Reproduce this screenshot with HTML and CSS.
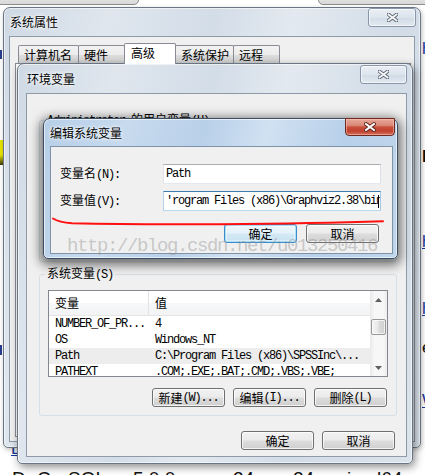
FILE: index.html
```html
<!DOCTYPE html>
<html lang="zh-CN">
<head>
<meta charset="utf-8">
<title>编辑系统变量</title>
<link rel="stylesheet" href="styles.css">
</head>
<body>
<div class="desk">
  <div class="bgwin bgwin-l"></div>
  <div class="bgwin bgwin-r"></div>
  <div class="bgmark bgmark-y"></div>
  <div class="bgmark bgmark-b1"></div>
  <div class="bgmark bgmark-b2"></div>
  <span class="frag lnk f1">h</span>
  <span class="frag f2">I</span>
  <span class="frag lnk ul f3">h</span>
  <span class="frag lnk ul f4">h</span>
  <span class="frag f5">e</span>
  <span class="frag lnk ul f6">W</span>
  <span class="frag lnk ul f7">L</span>
  <div class="bgline"><span class="b1">D</span><span class="b2">C</span><span class="b3">SQL</span><span class="b4">5.0.0</span><span class="b5">24</span><span class="b6">24</span><span class="b7">i</span><span class="b8">l64</span></div>

  <section class="win win-sys">
    <header class="tbar"><span class="ttl">系统属性</span>
      <span class="xbtn"><svg width="11" height="9" viewBox="0 0 11 9"><path d="M1.5 1.5L9.5 7.5M9.5 1.5L1.5 7.5" stroke="#5b6470" stroke-width="3.6" stroke-linecap="square"/><path d="M1.5 1.5L9.5 7.5M9.5 1.5L1.5 7.5" stroke="#f4f6f8" stroke-width="1.8" stroke-linecap="square"/></svg></span>
    </header>
    <div class="client client-sys">
      <div class="tabs">
        <span class="tab t1">计算机名</span><span class="tab t2">硬件</span><span class="tab t3 sel">高级</span><span class="tab t4">系统保护</span><span class="tab t5">远程</span>
      </div>
      <div class="tabpanel"></div>
    </div>
  </section>

  <section class="win win-env">
    <header class="tbar"><span class="ttl">环境变量</span>
      <span class="xbtn"><svg width="11" height="9" viewBox="0 0 11 9"><path d="M1.5 1.5L9.5 7.5M9.5 1.5L1.5 7.5" stroke="#5b6470" stroke-width="3.6" stroke-linecap="square"/><path d="M1.5 1.5L9.5 7.5M9.5 1.5L1.5 7.5" stroke="#f4f6f8" stroke-width="1.8" stroke-linecap="square"/></svg></span>
    </header>
    <div class="client client-env">
      <fieldset class="grp grp-user"><legend><span class="m">Administrator </span>的用户变量<span class="m">(U)</span></legend></fieldset>
      <fieldset class="grp grp-sys"><legend>系统变量<span class="m">(S)</span></legend>
        <div class="list">
          <div class="lv">
            <div class="lv-head"><span class="c1">变量</span><span class="c2">值</span></div>
            <div class="lv-row"><span class="c1 m">NUMBER_OF_PR...</span><span class="c2 m">4</span></div>
            <div class="lv-row"><span class="c1 m">OS</span><span class="c2 m">Windows_NT</span></div>
            <div class="lv-row sel"><span class="c1 m">Path</span><span class="c2 m">C:\Program Files (x86)\SPSSInc\...</span></div>
            <div class="lv-row"><span class="c1 m">PATHEXT</span><span class="c2 m">.COM;.EXE;.BAT;.CMD;.VBS;.VBE;</span></div>
          </div>
          <div class="sbar">
            <span class="sarr"><svg width="7" height="4" viewBox="0 0 7 4"><path d="M0 4L3.5 0L7 4Z" fill="#606060"/></svg></span>
            <span class="thumb"></span>
            <span class="sfill"></span>
            <span class="sarr"><svg width="7" height="4" viewBox="0 0 7 4"><path d="M0 0L3.5 4L7 0Z" fill="#606060"/></svg></span>
          </div>
        </div>
        <div class="btnrow">
          <button class="btn">新建<span class="m">(W)...</span></button>
          <button class="btn">编辑<span class="m">(I)...</span></button>
          <button class="btn">删除<span class="m">(L)</span></button>
        </div>
      </fieldset>
      <div class="btnrow btnrow-env">
        <button class="btn">确定</button>
        <button class="btn">取消</button>
      </div>
    </div>
  </section>

  <section class="win win-edit">
    <header class="tbar"><span class="ttl">编辑系统变量</span>
      <span class="xbtn red"><svg width="12" height="10" viewBox="0 0 12 10"><path d="M2 2L10 8M10 2L2 8" stroke="#5a1e16" stroke-width="3.8" stroke-linecap="square"/><path d="M2 2L10 8M10 2L2 8" stroke="#ffffff" stroke-width="2" stroke-linecap="square"/></svg></span>
    </header>
    <div class="client client-edit">
      <div class="form">
        <label class="lbl">变量名<span class="m">(N):</span></label>
        <div class="inp"><span class="m">Path</span></div>
        <label class="lbl">变量值<span class="m">(V):</span></label>
        <div class="inp focus"><span class="m">'rogram Files (x86)\Graphviz2.38\bin</span></div>
      </div>
      <div class="btnrow btnrow-edit">
        <button class="btn def">确定</button>
        <button class="btn">取消</button>
      </div>
    </div>
  </section>

  <svg class="redline" width="425" height="475" viewBox="0 0 425 475">
    <path d="M53 218.5C57 221 62 222.5 72 223.2C110 224.2 160 224.6 220 224.2C290 223.6 340 222.6 383 221.2" fill="none" stroke="#ff1010" stroke-width="2" stroke-linecap="round"/>
  </svg>
  <div class="wm">http://blog.csdn.net/u013250416</div>
</div>
</body>
</html>
```

FILE: styles.css
```css
* { box-sizing: border-box; margin: 0; padding: 0; }
html, body { width: 425px; height: 475px; overflow: hidden; background: #fff; }
body {
  font-family: "Noto Sans CJK SC", "Noto Sans", sans-serif;
  font-size: 12px;
  line-height: 14px;
  color: #000;
}
.desk { position: relative; width: 425px; height: 475px; overflow: hidden; background: #fff; }

.m {
  font-family: "Liberation Mono", "DejaVu Sans Mono", monospace;
  font-size: 12px;
  letter-spacing: -1.2px;
  white-space: pre;
}

/* ---------- background fragments ---------- */
.bgwin {
  position: absolute;
  top: -8px;
  height: 13px;
  background: linear-gradient(#ececec, #d8d8d8);
  border: 1px solid #8c8c8c;
  border-radius: 0 0 5px 5px;
}
.bgwin-l { left: -10px; width: 149px; }
.bgwin-r { left: 318px; width: 130px; }
.bgmark { position: absolute; left: 0; width: 3px; }
.bgmark-y { top: 140px; height: 25px; background: linear-gradient(#e8e400 60%, #3a3a10); }
.bgmark-b1 { top: 50px; height: 9px; background: #2a3f8f; width: 2px; }
.bgmark-b2 { top: 345px; height: 10px; background: #2a3f8f; width: 2px; }

.frag {
  position: absolute;
  left: 422px;
  font-family: "Liberation Sans", sans-serif;
  font-size: 17px;
  line-height: 18px;
  color: #111;
}
.lnk { color: #1a3a9a; }
.ul { text-decoration: underline; }
.f1 { top: 40px; }
.f2 { top: 148px; font-weight: bold; }
.f3 { top: 233px; }
.f4 { top: 300px; }
.f5 { top: 339px; }
.f6 { top: 392px; }
.f7 { top: 440px; left: 11px; }

.bgline {
  position: absolute;
  left: 12px;
  top: 469px;
  display: flex;
  font-family: "Liberation Sans", sans-serif;
  font-size: 19px;
  line-height: 20px;
  color: #111;
  white-space: nowrap;
}
.b1 { width: 25px; }
.b2 { width: 31px; }
.b3 { width: 65px; }
.b4 { width: 100px; }
.b5 { width: 60px; }
.b6 { width: 54px; }
.b7 { width: 30px; }

/* ---------- windows ---------- */
.win {
  position: absolute;
  display: flex;
  flex-direction: column;
  border: 1px solid #6a7684;
  border-radius: 7px 7px 5px 5px;
  background: linear-gradient(105deg, #cfd9e4 0%, #dfe6ee 20%, #d3dde8 40%, #e3e9f0 55%, #d2dce7 75%, #dbe3ec 100%);
  box-shadow: inset 0 0 0 1px rgba(255, 255, 255, .55);
}
.tbar {
  position: relative;
  flex: none;
  height: 28px;
  display: flex;
  align-items: center;
  padding-left: 6px;
}
.ttl { text-shadow: 0 0 5px #fff, 0 0 3px #fff; }
.client {
  flex: 1;
  position: relative;
  background: #f0f0f0;
  border: 1px solid #8e9aa8;
  display: flex;
  flex-direction: column;
}

.xbtn {
  position: absolute;
  display: flex;
  align-items: center;
  justify-content: center;
  border: 1px solid #8797a9;
  border-radius: 3px;
  background: linear-gradient(rgba(255, 255, 255, .5), rgba(255, 255, 255, .2) 50%, rgba(200, 212, 226, .35) 51%, rgba(255, 255, 255, .35));
  box-shadow: inset 0 0 0 1px rgba(255, 255, 255, .6);
}

/* 系统属性 */
.win-sys {
  left: 3px;
  top: 7px;
  width: 418px;
  height: 441px;
  box-shadow: inset 0 0 0 1px rgba(255, 255, 255, .55), 1px 2px 5px rgba(0, 0, 0, .25);
}
.win-sys .xbtn { top: 0; right: 4px; width: 48px; height: 19px; }
.client-sys { margin: 0 5px 5px; padding: 6px 3px 4px 5px; }
.tabs { display: flex; align-items: flex-end; height: 21px; padding-left: 3px; flex: none; }
.tab {
  height: 19px;
  margin-right: -1px;
  border: 1px solid #898c95;
  border-bottom: none;
  border-radius: 2px 2px 0 0;
  padding-left: 5px;
  line-height: 18px;
  background: linear-gradient(#f3f3f3, #ebebeb 50%, #dddddd 50%, #cfcfcf);
  white-space: nowrap;
}
.tab.sel { height: 21px; background: #fff; padding-left: 6px; position: relative; z-index: 1; line-height: 18px; }
.t1 { width: 61px; }
.t2 { width: 47px; }
.t3 { width: 52px; }
.t4 { width: 59px; }
.t5 { width: 47px; }
.tabpanel { flex: 1; margin-top: -1px; border: 1px solid #898c95; background: #fff; }

/* 环境变量 */
.win-env {
  left: 17px;
  top: 63px;
  width: 396px;
  height: 401px;
  box-shadow: inset 0 0 0 1px rgba(255, 255, 255, .55), 2px 3px 9px rgba(0, 0, 0, .45);
}
.win-env .tbar { height: 29px; padding-left: 9px; }
.win-env .xbtn { top: 1px; right: 5px; width: 47px; height: 19px; }
.client-env { margin: 0 5px 6px 8px; padding: 0 9px 0 12px; }

.grp {
  border: 1px solid #d5dfe5;
  border-radius: 3px;
  padding: 8px 8px 10px;
  min-width: 0;
}
.grp legend { padding: 0 2px; margin-left: -3px; line-height: 14px; white-space: nowrap; }
.grp-user { margin-top: 18px; height: 150px; }
.grp-sys { margin-top: 4px; height: 150px; }

.list {
  height: 87px;
  border: 1px solid #828790;
  background: #fff;
  display: flex;
  overflow: hidden;
}
.lv { flex: 1; min-width: 0; overflow: hidden; }
.lv-head {
  height: 25px;
  display: flex;
  border-bottom: 1px solid #e5e5e5;
  background: linear-gradient(#ffffff, #ffffff 50%, #f7f8fa 50%, #f2f3f5);
}
.lv-head span { display: flex; align-items: center; }
.lv-head .c1 { border-right: 1px solid #e3e3e3; }
.c1 { width: 100px; flex: none; padding-left: 6px; white-space: nowrap; overflow: hidden; }
.c2 { flex: 1; padding-left: 6px; white-space: nowrap; overflow: hidden; }
.lv-row { height: 16px; display: flex; align-items: center; white-space: nowrap; }
.lv-row.sel { background: #ededed; }

.sbar {
  width: 17px;
  flex: none;
  display: flex;
  flex-direction: column;
  background: linear-gradient(90deg, #e9e9e9, #f7f7f7 25%, #f7f7f7 75%, #ededed);
}
.sarr { height: 17px; flex: none; display: flex; align-items: center; justify-content: center; }
.thumb {
  height: 16px;
  flex: none;
  margin: 11px 1px 0;
  border: 1px solid #979797;
  border-radius: 2px;
  background: linear-gradient(90deg, #f4f4f4, #e9e9e9 45%, #dadada 55%, #d0d0d0);
  box-shadow: inset 0 0 0 1px rgba(255, 255, 255, .7);
}
.sfill { flex: 1; }

.btnrow { display: flex; justify-content: flex-end; gap: 8px; }
.grp-sys .btnrow { margin-top: 11px; padding-right: 1px; }
.btnrow-env { margin-top: 15px; margin-right: 2px; }

.btn {
  font: inherit;
  color: #000;
  width: 73px;
  height: 19px;
  display: flex;
  align-items: center;
  justify-content: center;
  border: 1px solid #707070;
  border-radius: 3px;
  background: linear-gradient(#f2f2f2, #ebebeb 48%, #dddddd 52%, #cfcfcf);
  box-shadow: inset 0 0 0 1px rgba(255, 255, 255, .75);
  white-space: nowrap;
}
.btn.def {
  border-color: #3c8ccc;
  box-shadow: inset 0 0 0 1px #a9e0f7, inset 0 0 0 2px rgba(255, 255, 255, .4);
  background: linear-gradient(#eef7fc, #e4f2fa 48%, #d4e9f5 52%, #c8e1f0);
}

/* 编辑系统变量 */
.win-edit {
  left: 43px;
  top: 118px;
  width: 355px;
  height: 141px;
  border-color: #3b4e63;
  background: linear-gradient(105deg, #b6cee7 0%, #c7daee 22%, #b9d0e9 42%, #d0e1f2 58%, #b8d0e9 78%, #bfd5eb 100%);
  box-shadow: inset 0 0 0 1px rgba(255, 255, 255, .6), 0 3px 11px 3px rgba(0, 0, 0, .55);
}
.win-edit .tbar { height: 27px; padding-left: 6px; }
.xbtn.red {
  top: -1px;
  right: 2px;
  width: 50px;
  height: 18px;
  border-color: #6e2a20;
  border-radius: 0 0 4px 4px;
  background: linear-gradient(#e8a898 0%, #d98877 40%, #c8503b 50%, #c2412e 75%, #d2735e 100%);
  box-shadow: inset 0 0 0 1px rgba(255, 200, 190, .5);
}
.client-edit { margin: 0 4px 4px 6px; padding: 17px 0 0 9px; border-color: #7f93a8; }
.form { display: grid; grid-template-columns: 103px 218px; row-gap: 7px; align-items: center; }
.lbl { white-space: nowrap; }
.inp {
  position: relative;
  height: 20px;
  border: 1px solid;
  border-color: #abadb3 #dbdfe6 #e3e9ef #e2e3ea;
  background: #fff;
  display: flex;
  align-items: center;
  padding-left: 2px;
  white-space: nowrap;
  overflow: hidden;
}
.inp.focus { border-color: #3d7bad #a4c9e3 #b7d9ed #b5cfe7; }
.inp.focus::after {
  content: "";
  position: absolute;
  right: 1px;
  top: 3px;
  width: 1px;
  height: 13px;
  background: #000;
}
.btnrow-edit { margin-top: 13px; padding-right: 13px; gap: 9px; }

.redline { position: absolute; left: 0; top: 0; pointer-events: none; }
.wm {
  position: absolute;
  left: 67px;
  top: 235px;
  font-family: "Liberation Mono", monospace;
  font-size: 19px;
  line-height: 22px;
  letter-spacing: -1.4px;
  color: rgba(140, 140, 140, .42);
  white-space: nowrap;
  pointer-events: none;
}
```
